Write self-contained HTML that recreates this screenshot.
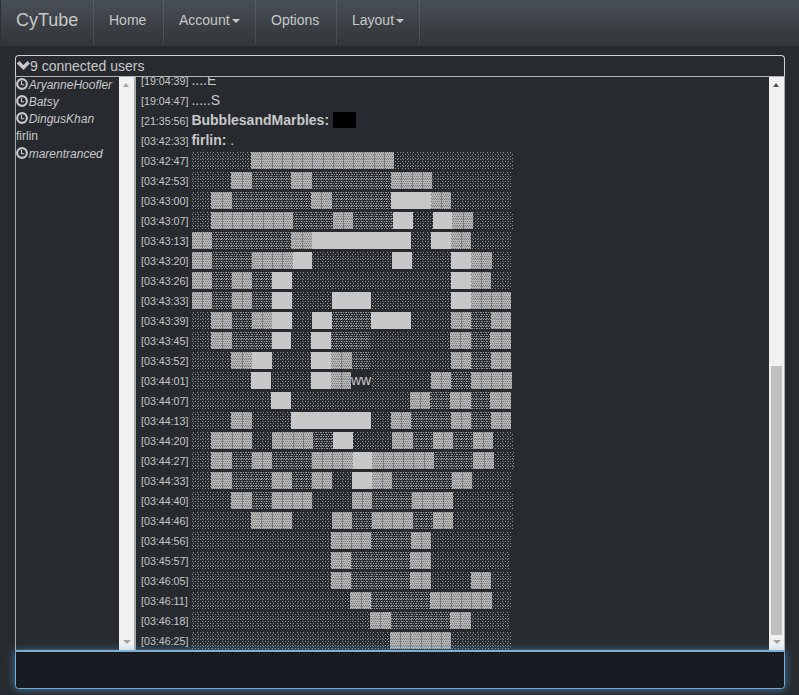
<!DOCTYPE html>
<html><head><meta charset="utf-8">
<style>
*{box-sizing:border-box}
html,body{margin:0;padding:0}
body{width:799px;height:695px;overflow:hidden;background:#272b30;color:#c8c8c8;font-family:"Liberation Sans",sans-serif;font-size:14px;line-height:20px;position:relative}
#nav{position:absolute;left:0;top:0;width:799px;height:46px;background:linear-gradient(#484e55,#3a3f44 60%,#323639);border-left:1px solid #2d3034}
#brand{position:absolute;left:15px;top:8px;font-size:18px;line-height:24px;color:#c8c8c8}
.nl{position:absolute;top:0;height:45px;line-height:20px;padding-top:10px;color:#c8c8c8}
.dv{position:absolute;top:0;width:1px;height:45px;background:rgba(255,255,255,0.1)}
.caret{display:inline-block;width:0;height:0;border-top:4px solid #c8c8c8;border-left:4px solid transparent;border-right:4px solid transparent;vertical-align:middle;margin-left:2px;margin-top:0}
#hdr{position:absolute;left:15px;top:55px;width:770px;height:22px;border:1px solid #d0d0d0;border-bottom:1px solid #b4b4b4;border-radius:4px 4px 0 0}
#hdr .t{position:absolute;left:14px;top:0px;line-height:20px}
#chev{position:absolute;left:0;top:0}
#ul{position:absolute;left:15px;top:77px;width:121px;height:574px;border-left:1px solid #aaa;border-bottom:1px solid #aaa;border-right:2px solid #aaa;overflow:hidden;font-size:12px;line-height:17.14px}
#ul .u{position:relative;height:17.14px;white-space:nowrap}
#ul .u i{font-style:italic}
.clk{display:inline-block;width:12px;height:12px;vertical-align:-1px;margin-right:0.7px}
#ulsb{position:absolute;left:103px;top:0;width:15px;height:573px;background:#f1f1f1}
#mb{position:absolute;left:136px;top:77px;width:649px;height:574px;border-right:1px solid #aaa;border-bottom:1px solid #aaa;overflow:hidden}
#mbin{position:absolute;left:5px;top:-7px;width:620px;white-space:nowrap}
.m{position:relative}
.ww{position:absolute;top:0}
#art{position:absolute;left:-136px;top:-77px}
.m{height:20px;white-space:nowrap}
.ts{font-size:8pt}
b.n{font-weight:bold}
#mbsb{position:absolute;left:633px;top:0;width:15px;height:573px;background:#f1f1f1}
#thumb{position:absolute;left:2px;top:289px;width:11px;height:269px;background:#c1c1c1}
.arr{position:absolute;width:0;height:0;border-left:3.75px solid transparent;border-right:3.75px solid transparent}
#inp{position:absolute;left:15px;top:651px;width:770px;height:38px;background:#181b22;border:1px solid #66afe9;border-radius:0 0 3.5px 3.5px;box-shadow:inset 0 1px 1px rgba(0,0,0,.075),0 0 8px rgba(102,175,233,.6)}
.spoil{display:inline-block;width:23px;height:16px;background:#000;vertical-align:top;margin-top:2px}
</style></head><body>
<div id="nav">
  <div id="brand">CyTube</div>
  <div class="dv" style="left:92px"></div>
  <div class="nl" style="left:108px">Home</div>
  <div class="dv" style="left:162px"></div>
  <div class="nl" style="left:178px">Account<span class="caret"></span></div>
  <div class="dv" style="left:254px"></div>
  <div class="nl" style="left:270px">Options</div>
  <div class="dv" style="left:335px"></div>
  <div class="nl" style="left:351px">Layout<span class="caret"></span></div>
  <div class="dv" style="left:418px"></div>
</div>
<div id="hdr">
  <svg id="chev" width="16" height="16" viewBox="0 0 16 16"><path d="M0.8 7.5 L7.5 14.1 L13.7 7.5 L11.6 4.9 L7.5 8.9 L3.4 4.9 Z" fill="#c8c8c8"/></svg>
  <span class="t">9 connected users</span>
</div>
<div id="ul">
  <div class="u"><svg class="clk" viewBox="0 0 12 12"><circle cx="6" cy="6" r="4.85" stroke="#c8c8c8" stroke-width="2.1" fill="none"/><path d="M5.5 3.1v3.6h2.6" stroke="#c8c8c8" stroke-width="1.15" fill="none"/></svg><i>AryanneHoofler</i></div>
  <div class="u"><svg class="clk" viewBox="0 0 12 12"><circle cx="6" cy="6" r="4.85" stroke="#c8c8c8" stroke-width="2.1" fill="none"/><path d="M5.5 3.1v3.6h2.6" stroke="#c8c8c8" stroke-width="1.15" fill="none"/></svg><i>Batsy</i></div>
  <div class="u"><svg class="clk" viewBox="0 0 12 12"><circle cx="6" cy="6" r="4.85" stroke="#c8c8c8" stroke-width="2.1" fill="none"/><path d="M5.5 3.1v3.6h2.6" stroke="#c8c8c8" stroke-width="1.15" fill="none"/></svg><i>DingusKhan</i></div>
  <div class="u">firlin</div>
  <div class="u"><svg class="clk" viewBox="0 0 12 12"><circle cx="6" cy="6" r="4.85" stroke="#c8c8c8" stroke-width="2.1" fill="none"/><path d="M5.5 3.1v3.6h2.6" stroke="#c8c8c8" stroke-width="1.15" fill="none"/></svg><i>marentranced</i></div>
  <div id="ulsb">
    <div class="arr" style="left:3.75px;top:6px;border-bottom:4px solid #a3a3a3"></div>
    <div class="arr" style="left:3.5px;bottom:6px;border-top:4.5px solid #a3a3a3;border-left-width:4px;border-right-width:4px"></div>
  </div>
</div>
<div id="mb">
  <div id="mbin">
<div class="m"><span class="ts">[19:04:39] </span><span>....E</span></div>
<div class="m"><span class="ts">[19:04:47] </span><span>.....S</span></div>
<div class="m"><span class="ts">[21:35:56] </span><b class="n">BubblesandMarbles: </b><span class="spoil"></span></div>
<div class="m"><span class="ts">[03:42:33] </span><b class="n">firlin: </b><span>.</span></div>
<div class="m"><span class="ts">[03:42:47] </span></div>
<div class="m"><span class="ts">[03:42:53] </span></div>
<div class="m"><span class="ts">[03:43:00] </span></div>
<div class="m"><span class="ts">[03:43:07] </span></div>
<div class="m"><span class="ts">[03:43:13] </span></div>
<div class="m"><span class="ts">[03:43:20] </span></div>
<div class="m"><span class="ts">[03:43:26] </span></div>
<div class="m"><span class="ts">[03:43:33] </span></div>
<div class="m"><span class="ts">[03:43:39] </span></div>
<div class="m"><span class="ts">[03:43:45] </span></div>
<div class="m"><span class="ts">[03:43:52] </span></div>
<div class="m"><span class="ts">[03:44:01] </span><span class="ww" style="left:209.93px">ww</span></div>
<div class="m"><span class="ts">[03:44:07] </span></div>
<div class="m"><span class="ts">[03:44:13] </span></div>
<div class="m"><span class="ts">[03:44:20] </span></div>
<div class="m"><span class="ts">[03:44:27] </span></div>
<div class="m"><span class="ts">[03:44:33] </span></div>
<div class="m"><span class="ts">[03:44:40] </span></div>
<div class="m"><span class="ts">[03:44:46] </span></div>
<div class="m"><span class="ts">[03:44:56] </span></div>
<div class="m"><span class="ts">[03:45:57] </span></div>
<div class="m"><span class="ts">[03:46:05] </span></div>
<div class="m"><span class="ts">[03:46:11] </span></div>
<div class="m"><span class="ts">[03:46:18] </span></div>
<div class="m"><span class="ts">[03:46:25] </span></div>

  </div>
  <svg id="art" width="799" height="695" shape-rendering="crispEdges">
  <defs>
  <pattern id="pa" patternUnits="userSpaceOnUse" width="10" height="20"><g fill="#c8c8c8" fill-opacity="0.66"><rect x="0" y="12" width="1" height="1"/><rect x="3" y="12" width="1" height="1"/><rect x="7" y="12" width="1" height="1"/><rect x="2" y="14" width="1" height="1"/><rect x="5" y="14" width="1" height="1"/><rect x="8" y="14" width="1" height="1"/><rect x="0" y="16" width="1" height="1"/><rect x="3" y="16" width="1" height="1"/><rect x="7" y="16" width="1" height="1"/><rect x="2" y="18" width="1" height="1"/><rect x="5" y="18" width="1" height="1"/><rect x="8" y="18" width="1" height="1"/><rect x="0" y="19" width="1" height="1"/><rect x="3" y="19" width="1" height="1"/><rect x="7" y="19" width="1" height="1"/><rect x="2" y="1" width="1" height="1"/><rect x="5" y="1" width="1" height="1"/><rect x="8" y="1" width="1" height="1"/><rect x="0" y="3" width="1" height="1"/><rect x="3" y="3" width="1" height="1"/><rect x="7" y="3" width="1" height="1"/><rect x="2" y="5" width="1" height="1"/><rect x="5" y="5" width="1" height="1"/><rect x="8" y="5" width="1" height="1"/><rect x="0" y="6" width="1" height="1"/><rect x="3" y="6" width="1" height="1"/><rect x="7" y="6" width="1" height="1"/><rect x="2" y="8" width="1" height="1"/><rect x="5" y="8" width="1" height="1"/><rect x="8" y="8" width="1" height="1"/></g></pattern>
  <pattern id="pb" patternUnits="userSpaceOnUse" width="10" height="20"><g fill="#c8c8c8" fill-opacity="0.68"><rect x="0" y="12" width="1" height="1"/><rect x="1" y="12" width="1" height="1"/><rect x="3" y="12" width="1" height="1"/><rect x="5" y="12" width="1" height="1"/><rect x="6" y="12" width="1" height="1"/><rect x="8" y="12" width="1" height="1"/><rect x="1" y="14" width="1" height="1"/><rect x="2" y="14" width="1" height="1"/><rect x="4" y="14" width="1" height="1"/><rect x="6" y="14" width="1" height="1"/><rect x="7" y="14" width="1" height="1"/><rect x="9" y="14" width="1" height="1"/><rect x="0" y="16" width="1" height="1"/><rect x="1" y="16" width="1" height="1"/><rect x="3" y="16" width="1" height="1"/><rect x="5" y="16" width="1" height="1"/><rect x="6" y="16" width="1" height="1"/><rect x="8" y="16" width="1" height="1"/><rect x="1" y="18" width="1" height="1"/><rect x="2" y="18" width="1" height="1"/><rect x="4" y="18" width="1" height="1"/><rect x="6" y="18" width="1" height="1"/><rect x="7" y="18" width="1" height="1"/><rect x="9" y="18" width="1" height="1"/><rect x="0" y="19" width="1" height="1"/><rect x="1" y="19" width="1" height="1"/><rect x="3" y="19" width="1" height="1"/><rect x="5" y="19" width="1" height="1"/><rect x="6" y="19" width="1" height="1"/><rect x="8" y="19" width="1" height="1"/><rect x="1" y="1" width="1" height="1"/><rect x="2" y="1" width="1" height="1"/><rect x="4" y="1" width="1" height="1"/><rect x="6" y="1" width="1" height="1"/><rect x="7" y="1" width="1" height="1"/><rect x="9" y="1" width="1" height="1"/><rect x="0" y="3" width="1" height="1"/><rect x="1" y="3" width="1" height="1"/><rect x="3" y="3" width="1" height="1"/><rect x="5" y="3" width="1" height="1"/><rect x="6" y="3" width="1" height="1"/><rect x="8" y="3" width="1" height="1"/><rect x="1" y="5" width="1" height="1"/><rect x="2" y="5" width="1" height="1"/><rect x="4" y="5" width="1" height="1"/><rect x="6" y="5" width="1" height="1"/><rect x="7" y="5" width="1" height="1"/><rect x="9" y="5" width="1" height="1"/><rect x="0" y="6" width="1" height="1"/><rect x="1" y="6" width="1" height="1"/><rect x="3" y="6" width="1" height="1"/><rect x="5" y="6" width="1" height="1"/><rect x="6" y="6" width="1" height="1"/><rect x="8" y="6" width="1" height="1"/><rect x="1" y="8" width="1" height="1"/><rect x="2" y="8" width="1" height="1"/><rect x="4" y="8" width="1" height="1"/><rect x="6" y="8" width="1" height="1"/><rect x="7" y="8" width="1" height="1"/><rect x="9" y="8" width="1" height="1"/></g></pattern>
  <pattern id="pc" patternUnits="userSpaceOnUse" width="10" height="20"><rect x="0" y="0" width="10" height="20" fill="#c8c8c8" fill-opacity="0.88"/><g fill="#272b30" fill-opacity="0.42"><rect x="0" y="12" width="1" height="1"/><rect x="2" y="12" width="1" height="1"/><rect x="4" y="12" width="1" height="1"/><rect x="6" y="12" width="1" height="1"/><rect x="8" y="12" width="1" height="1"/><rect x="1" y="14" width="1" height="1"/><rect x="3" y="14" width="1" height="1"/><rect x="5" y="14" width="1" height="1"/><rect x="7" y="14" width="1" height="1"/><rect x="9" y="14" width="1" height="1"/><rect x="0" y="16" width="1" height="1"/><rect x="2" y="16" width="1" height="1"/><rect x="4" y="16" width="1" height="1"/><rect x="6" y="16" width="1" height="1"/><rect x="8" y="16" width="1" height="1"/><rect x="1" y="18" width="1" height="1"/><rect x="3" y="18" width="1" height="1"/><rect x="5" y="18" width="1" height="1"/><rect x="7" y="18" width="1" height="1"/><rect x="9" y="18" width="1" height="1"/><rect x="0" y="19" width="1" height="1"/><rect x="2" y="19" width="1" height="1"/><rect x="4" y="19" width="1" height="1"/><rect x="6" y="19" width="1" height="1"/><rect x="8" y="19" width="1" height="1"/><rect x="1" y="1" width="1" height="1"/><rect x="3" y="1" width="1" height="1"/><rect x="5" y="1" width="1" height="1"/><rect x="7" y="1" width="1" height="1"/><rect x="9" y="1" width="1" height="1"/><rect x="0" y="3" width="1" height="1"/><rect x="2" y="3" width="1" height="1"/><rect x="4" y="3" width="1" height="1"/><rect x="6" y="3" width="1" height="1"/><rect x="8" y="3" width="1" height="1"/><rect x="1" y="5" width="1" height="1"/><rect x="3" y="5" width="1" height="1"/><rect x="5" y="5" width="1" height="1"/><rect x="7" y="5" width="1" height="1"/><rect x="9" y="5" width="1" height="1"/><rect x="0" y="6" width="1" height="1"/><rect x="2" y="6" width="1" height="1"/><rect x="4" y="6" width="1" height="1"/><rect x="6" y="6" width="1" height="1"/><rect x="8" y="6" width="1" height="1"/><rect x="1" y="8" width="1" height="1"/><rect x="3" y="8" width="1" height="1"/><rect x="5" y="8" width="1" height="1"/><rect x="7" y="8" width="1" height="1"/><rect x="9" y="8" width="1" height="1"/></g></pattern>
  <pattern id="pd" patternUnits="userSpaceOnUse" width="4" height="4"><rect x="0" y="0" width="4" height="4" fill="#c8c8c8"/></pattern>
  </defs>
<rect x="191.65" y="152" width="59.51" height="17" fill="url(#pa)"/>
<rect x="251.16" y="152" width="142.88" height="17" fill="url(#pc)"/>
<rect x="261" y="152" width="1" height="17" fill="#272b30" fill-opacity="0.35"/>
<rect x="272" y="152" width="1" height="17" fill="#272b30" fill-opacity="0.35"/>
<rect x="282" y="152" width="1" height="17" fill="#272b30" fill-opacity="0.35"/>
<rect x="292" y="152" width="1" height="17" fill="#272b30" fill-opacity="0.35"/>
<rect x="302" y="152" width="1" height="17" fill="#272b30" fill-opacity="0.35"/>
<rect x="312" y="152" width="1" height="17" fill="#272b30" fill-opacity="0.35"/>
<rect x="323" y="152" width="1" height="17" fill="#272b30" fill-opacity="0.35"/>
<rect x="333" y="152" width="1" height="17" fill="#272b30" fill-opacity="0.35"/>
<rect x="343" y="152" width="1" height="17" fill="#272b30" fill-opacity="0.35"/>
<rect x="353" y="152" width="1" height="17" fill="#272b30" fill-opacity="0.35"/>
<rect x="363" y="152" width="1" height="17" fill="#272b30" fill-opacity="0.35"/>
<rect x="374" y="152" width="1" height="17" fill="#272b30" fill-opacity="0.35"/>
<rect x="384" y="152" width="1" height="17" fill="#272b30" fill-opacity="0.35"/>
<rect x="394.05" y="152" width="119.03" height="17" fill="url(#pa)"/>
<rect x="191.65" y="172" width="39.68" height="17" fill="url(#pa)"/>
<rect x="231.33" y="172" width="20.41" height="17" fill="url(#pc)"/>
<rect x="242" y="172" width="1" height="17" fill="#272b30" fill-opacity="0.35"/>
<rect x="251.74" y="172" width="39.68" height="17" fill="url(#pb)"/>
<rect x="291.41" y="172" width="20.41" height="17" fill="url(#pc)"/>
<rect x="302" y="172" width="1" height="17" fill="#272b30" fill-opacity="0.35"/>
<rect x="311.83" y="172" width="79.35" height="17" fill="url(#pb)"/>
<rect x="391.18" y="172" width="40.82" height="17" fill="url(#pc)"/>
<rect x="401" y="172" width="1" height="17" fill="#272b30" fill-opacity="0.35"/>
<rect x="412" y="172" width="1" height="17" fill="#272b30" fill-opacity="0.35"/>
<rect x="422" y="172" width="1" height="17" fill="#272b30" fill-opacity="0.35"/>
<rect x="432.00" y="172" width="79.35" height="17" fill="url(#pa)"/>
<rect x="191.65" y="192" width="19.84" height="17" fill="url(#pa)"/>
<rect x="211.49" y="192" width="20.41" height="17" fill="url(#pc)"/>
<rect x="222" y="192" width="1" height="17" fill="#272b30" fill-opacity="0.35"/>
<rect x="231.90" y="192" width="79.35" height="17" fill="url(#pb)"/>
<rect x="311.25" y="192" width="20.41" height="17" fill="url(#pc)"/>
<rect x="321" y="192" width="1" height="17" fill="#272b30" fill-opacity="0.35"/>
<rect x="331.66" y="192" width="59.51" height="17" fill="url(#pb)"/>
<rect x="391.18" y="192" width="39.68" height="17" fill="url(#pd)"/>
<rect x="430.85" y="192" width="20.41" height="17" fill="url(#pc)"/>
<rect x="441" y="192" width="1" height="17" fill="#272b30" fill-opacity="0.35"/>
<rect x="451.27" y="192" width="59.51" height="17" fill="url(#pa)"/>
<rect x="191.65" y="212" width="19.84" height="17" fill="url(#pa)"/>
<rect x="211.49" y="212" width="81.65" height="17" fill="url(#pc)"/>
<rect x="222" y="212" width="1" height="17" fill="#272b30" fill-opacity="0.35"/>
<rect x="232" y="212" width="1" height="17" fill="#272b30" fill-opacity="0.35"/>
<rect x="242" y="212" width="1" height="17" fill="#272b30" fill-opacity="0.35"/>
<rect x="252" y="212" width="1" height="17" fill="#272b30" fill-opacity="0.35"/>
<rect x="263" y="212" width="1" height="17" fill="#272b30" fill-opacity="0.35"/>
<rect x="273" y="212" width="1" height="17" fill="#272b30" fill-opacity="0.35"/>
<rect x="283" y="212" width="1" height="17" fill="#272b30" fill-opacity="0.35"/>
<rect x="293.14" y="212" width="39.68" height="17" fill="url(#pb)"/>
<rect x="332.81" y="212" width="20.41" height="17" fill="url(#pc)"/>
<rect x="343" y="212" width="1" height="17" fill="#272b30" fill-opacity="0.35"/>
<rect x="353.22" y="212" width="39.68" height="17" fill="url(#pb)"/>
<rect x="392.90" y="212" width="19.84" height="17" fill="url(#pd)"/>
<rect x="412.74" y="212" width="19.84" height="17" fill="url(#pa)"/>
<rect x="432.58" y="212" width="19.84" height="17" fill="url(#pd)"/>
<rect x="452.41" y="212" width="20.41" height="17" fill="url(#pc)"/>
<rect x="463" y="212" width="1" height="17" fill="#272b30" fill-opacity="0.35"/>
<rect x="472.83" y="212" width="39.68" height="17" fill="url(#pa)"/>
<rect x="191.65" y="232" width="20.41" height="17" fill="url(#pc)"/>
<rect x="202" y="232" width="1" height="17" fill="#272b30" fill-opacity="0.35"/>
<rect x="212.06" y="232" width="79.35" height="17" fill="url(#pb)"/>
<rect x="291.41" y="232" width="20.41" height="17" fill="url(#pc)"/>
<rect x="302" y="232" width="1" height="17" fill="#272b30" fill-opacity="0.35"/>
<rect x="311.83" y="232" width="99.19" height="17" fill="url(#pd)"/>
<rect x="411.02" y="232" width="19.84" height="17" fill="url(#pa)"/>
<rect x="430.85" y="232" width="19.84" height="17" fill="url(#pd)"/>
<rect x="450.69" y="232" width="20.41" height="17" fill="url(#pc)"/>
<rect x="461" y="232" width="1" height="17" fill="#272b30" fill-opacity="0.35"/>
<rect x="471.10" y="232" width="39.68" height="17" fill="url(#pa)"/>
<rect x="191.65" y="252" width="20.41" height="17" fill="url(#pc)"/>
<rect x="202" y="252" width="1" height="17" fill="#272b30" fill-opacity="0.35"/>
<rect x="212.06" y="252" width="39.68" height="17" fill="url(#pb)"/>
<rect x="251.74" y="252" width="40.82" height="17" fill="url(#pc)"/>
<rect x="262" y="252" width="1" height="17" fill="#272b30" fill-opacity="0.35"/>
<rect x="272" y="252" width="1" height="17" fill="#272b30" fill-opacity="0.35"/>
<rect x="282" y="252" width="1" height="17" fill="#272b30" fill-opacity="0.35"/>
<rect x="292.56" y="252" width="19.84" height="17" fill="url(#pd)"/>
<rect x="312.40" y="252" width="79.35" height="17" fill="url(#pa)"/>
<rect x="391.75" y="252" width="19.84" height="17" fill="url(#pd)"/>
<rect x="411.59" y="252" width="39.68" height="17" fill="url(#pa)"/>
<rect x="451.27" y="252" width="19.84" height="17" fill="url(#pd)"/>
<rect x="471.10" y="252" width="20.41" height="17" fill="url(#pc)"/>
<rect x="481" y="252" width="1" height="17" fill="#272b30" fill-opacity="0.35"/>
<rect x="491.52" y="252" width="19.84" height="17" fill="url(#pa)"/>
<rect x="191.65" y="272" width="20.41" height="17" fill="url(#pc)"/>
<rect x="202" y="272" width="1" height="17" fill="#272b30" fill-opacity="0.35"/>
<rect x="212.06" y="272" width="19.84" height="17" fill="url(#pb)"/>
<rect x="231.90" y="272" width="20.41" height="17" fill="url(#pc)"/>
<rect x="242" y="272" width="1" height="17" fill="#272b30" fill-opacity="0.35"/>
<rect x="252.31" y="272" width="19.84" height="17" fill="url(#pb)"/>
<rect x="272.15" y="272" width="19.84" height="17" fill="url(#pd)"/>
<rect x="291.99" y="272" width="158.70" height="17" fill="url(#pa)"/>
<rect x="450.69" y="272" width="19.84" height="17" fill="url(#pd)"/>
<rect x="470.53" y="272" width="20.41" height="17" fill="url(#pc)"/>
<rect x="481" y="272" width="1" height="17" fill="#272b30" fill-opacity="0.35"/>
<rect x="490.94" y="272" width="19.84" height="17" fill="url(#pa)"/>
<rect x="191.65" y="292" width="20.41" height="17" fill="url(#pc)"/>
<rect x="202" y="292" width="1" height="17" fill="#272b30" fill-opacity="0.35"/>
<rect x="212.06" y="292" width="19.84" height="17" fill="url(#pb)"/>
<rect x="231.90" y="292" width="20.41" height="17" fill="url(#pc)"/>
<rect x="242" y="292" width="1" height="17" fill="#272b30" fill-opacity="0.35"/>
<rect x="252.31" y="292" width="19.84" height="17" fill="url(#pb)"/>
<rect x="272.15" y="292" width="19.84" height="17" fill="url(#pd)"/>
<rect x="291.99" y="292" width="39.68" height="17" fill="url(#pa)"/>
<rect x="331.66" y="292" width="39.68" height="17" fill="url(#pd)"/>
<rect x="371.34" y="292" width="79.35" height="17" fill="url(#pa)"/>
<rect x="450.69" y="292" width="19.84" height="17" fill="url(#pd)"/>
<rect x="470.53" y="292" width="40.82" height="17" fill="url(#pc)"/>
<rect x="481" y="292" width="1" height="17" fill="#272b30" fill-opacity="0.35"/>
<rect x="491" y="292" width="1" height="17" fill="#272b30" fill-opacity="0.35"/>
<rect x="501" y="292" width="1" height="17" fill="#272b30" fill-opacity="0.35"/>
<rect x="191.65" y="312" width="19.84" height="17" fill="url(#pa)"/>
<rect x="211.49" y="312" width="20.41" height="17" fill="url(#pc)"/>
<rect x="222" y="312" width="1" height="17" fill="#272b30" fill-opacity="0.35"/>
<rect x="231.90" y="312" width="19.84" height="17" fill="url(#pb)"/>
<rect x="251.74" y="312" width="20.41" height="17" fill="url(#pc)"/>
<rect x="262" y="312" width="1" height="17" fill="#272b30" fill-opacity="0.35"/>
<rect x="272.15" y="312" width="19.84" height="17" fill="url(#pd)"/>
<rect x="291.99" y="312" width="19.84" height="17" fill="url(#pa)"/>
<rect x="311.83" y="312" width="19.84" height="17" fill="url(#pd)"/>
<rect x="331.66" y="312" width="39.68" height="17" fill="url(#pb)"/>
<rect x="371.34" y="312" width="39.68" height="17" fill="url(#pd)"/>
<rect x="411.02" y="312" width="39.68" height="17" fill="url(#pa)"/>
<rect x="450.69" y="312" width="20.41" height="17" fill="url(#pc)"/>
<rect x="461" y="312" width="1" height="17" fill="#272b30" fill-opacity="0.35"/>
<rect x="471.10" y="312" width="19.84" height="17" fill="url(#pb)"/>
<rect x="490.94" y="312" width="20.41" height="17" fill="url(#pc)"/>
<rect x="501" y="312" width="1" height="17" fill="#272b30" fill-opacity="0.35"/>
<rect x="191.65" y="332" width="19.84" height="17" fill="url(#pa)"/>
<rect x="211.49" y="332" width="20.41" height="17" fill="url(#pc)"/>
<rect x="222" y="332" width="1" height="17" fill="#272b30" fill-opacity="0.35"/>
<rect x="231.90" y="332" width="39.68" height="17" fill="url(#pb)"/>
<rect x="271.58" y="332" width="19.84" height="17" fill="url(#pd)"/>
<rect x="291.41" y="332" width="19.84" height="17" fill="url(#pa)"/>
<rect x="311.25" y="332" width="19.84" height="17" fill="url(#pd)"/>
<rect x="331.09" y="332" width="39.68" height="17" fill="url(#pb)"/>
<rect x="370.77" y="332" width="79.35" height="17" fill="url(#pa)"/>
<rect x="450.12" y="332" width="20.41" height="17" fill="url(#pc)"/>
<rect x="460" y="332" width="1" height="17" fill="#272b30" fill-opacity="0.35"/>
<rect x="470.53" y="332" width="19.84" height="17" fill="url(#pb)"/>
<rect x="490.37" y="332" width="20.41" height="17" fill="url(#pc)"/>
<rect x="501" y="332" width="1" height="17" fill="#272b30" fill-opacity="0.35"/>
<rect x="191.65" y="352" width="39.68" height="17" fill="url(#pa)"/>
<rect x="231.33" y="352" width="20.41" height="17" fill="url(#pc)"/>
<rect x="242" y="352" width="1" height="17" fill="#272b30" fill-opacity="0.35"/>
<rect x="251.74" y="352" width="19.84" height="17" fill="url(#pd)"/>
<rect x="271.58" y="352" width="39.68" height="17" fill="url(#pa)"/>
<rect x="311.25" y="352" width="19.84" height="17" fill="url(#pd)"/>
<rect x="331.09" y="352" width="20.41" height="17" fill="url(#pc)"/>
<rect x="341" y="352" width="1" height="17" fill="#272b30" fill-opacity="0.35"/>
<rect x="351.50" y="352" width="19.84" height="17" fill="url(#pb)"/>
<rect x="371.34" y="352" width="79.35" height="17" fill="url(#pa)"/>
<rect x="450.69" y="352" width="20.41" height="17" fill="url(#pc)"/>
<rect x="461" y="352" width="1" height="17" fill="#272b30" fill-opacity="0.35"/>
<rect x="471.10" y="352" width="19.84" height="17" fill="url(#pb)"/>
<rect x="490.94" y="352" width="20.41" height="17" fill="url(#pc)"/>
<rect x="501" y="352" width="1" height="17" fill="#272b30" fill-opacity="0.35"/>
<rect x="191.65" y="372" width="59.51" height="17" fill="url(#pa)"/>
<rect x="251.16" y="372" width="19.84" height="17" fill="url(#pd)"/>
<rect x="271.00" y="372" width="39.68" height="17" fill="url(#pa)"/>
<rect x="310.68" y="372" width="19.84" height="17" fill="url(#pd)"/>
<rect x="330.52" y="372" width="20.41" height="17" fill="url(#pc)"/>
<rect x="341" y="372" width="1" height="17" fill="#272b30" fill-opacity="0.35"/>
<rect x="371.15" y="372" width="59.51" height="17" fill="url(#pa)"/>
<rect x="430.66" y="372" width="20.41" height="17" fill="url(#pc)"/>
<rect x="441" y="372" width="1" height="17" fill="#272b30" fill-opacity="0.35"/>
<rect x="451.07" y="372" width="19.84" height="17" fill="url(#pb)"/>
<rect x="470.91" y="372" width="40.82" height="17" fill="url(#pc)"/>
<rect x="481" y="372" width="1" height="17" fill="#272b30" fill-opacity="0.35"/>
<rect x="491" y="372" width="1" height="17" fill="#272b30" fill-opacity="0.35"/>
<rect x="502" y="372" width="1" height="17" fill="#272b30" fill-opacity="0.35"/>
<rect x="191.65" y="392" width="79.35" height="17" fill="url(#pa)"/>
<rect x="271.00" y="392" width="19.84" height="17" fill="url(#pd)"/>
<rect x="290.84" y="392" width="119.03" height="17" fill="url(#pa)"/>
<rect x="409.87" y="392" width="20.41" height="17" fill="url(#pc)"/>
<rect x="420" y="392" width="1" height="17" fill="#272b30" fill-opacity="0.35"/>
<rect x="430.28" y="392" width="19.84" height="17" fill="url(#pb)"/>
<rect x="450.12" y="392" width="20.41" height="17" fill="url(#pc)"/>
<rect x="460" y="392" width="1" height="17" fill="#272b30" fill-opacity="0.35"/>
<rect x="470.53" y="392" width="19.84" height="17" fill="url(#pb)"/>
<rect x="490.37" y="392" width="20.41" height="17" fill="url(#pc)"/>
<rect x="501" y="392" width="1" height="17" fill="#272b30" fill-opacity="0.35"/>
<rect x="191.65" y="412" width="39.68" height="17" fill="url(#pa)"/>
<rect x="231.33" y="412" width="20.41" height="17" fill="url(#pc)"/>
<rect x="242" y="412" width="1" height="17" fill="#272b30" fill-opacity="0.35"/>
<rect x="251.74" y="412" width="39.68" height="17" fill="url(#pa)"/>
<rect x="291.41" y="412" width="79.35" height="17" fill="url(#pd)"/>
<rect x="370.77" y="412" width="19.84" height="17" fill="url(#pa)"/>
<rect x="390.60" y="412" width="20.41" height="17" fill="url(#pc)"/>
<rect x="401" y="412" width="1" height="17" fill="#272b30" fill-opacity="0.35"/>
<rect x="411.02" y="412" width="39.68" height="17" fill="url(#pb)"/>
<rect x="450.69" y="412" width="20.41" height="17" fill="url(#pc)"/>
<rect x="461" y="412" width="1" height="17" fill="#272b30" fill-opacity="0.35"/>
<rect x="471.10" y="412" width="19.84" height="17" fill="url(#pb)"/>
<rect x="490.94" y="412" width="20.41" height="17" fill="url(#pc)"/>
<rect x="501" y="412" width="1" height="17" fill="#272b30" fill-opacity="0.35"/>
<rect x="191.65" y="432" width="19.84" height="17" fill="url(#pa)"/>
<rect x="211.49" y="432" width="40.82" height="17" fill="url(#pc)"/>
<rect x="222" y="432" width="1" height="17" fill="#272b30" fill-opacity="0.35"/>
<rect x="232" y="432" width="1" height="17" fill="#272b30" fill-opacity="0.35"/>
<rect x="242" y="432" width="1" height="17" fill="#272b30" fill-opacity="0.35"/>
<rect x="252.31" y="432" width="19.84" height="17" fill="url(#pa)"/>
<rect x="272.15" y="432" width="40.82" height="17" fill="url(#pc)"/>
<rect x="282" y="432" width="1" height="17" fill="#272b30" fill-opacity="0.35"/>
<rect x="293" y="432" width="1" height="17" fill="#272b30" fill-opacity="0.35"/>
<rect x="303" y="432" width="1" height="17" fill="#272b30" fill-opacity="0.35"/>
<rect x="312.97" y="432" width="19.84" height="17" fill="url(#pb)"/>
<rect x="332.81" y="432" width="19.84" height="17" fill="url(#pd)"/>
<rect x="352.65" y="432" width="39.68" height="17" fill="url(#pa)"/>
<rect x="392.33" y="432" width="20.41" height="17" fill="url(#pc)"/>
<rect x="403" y="432" width="1" height="17" fill="#272b30" fill-opacity="0.35"/>
<rect x="412.74" y="432" width="19.84" height="17" fill="url(#pb)"/>
<rect x="432.58" y="432" width="20.41" height="17" fill="url(#pc)"/>
<rect x="443" y="432" width="1" height="17" fill="#272b30" fill-opacity="0.35"/>
<rect x="452.99" y="432" width="19.84" height="17" fill="url(#pb)"/>
<rect x="472.83" y="432" width="20.41" height="17" fill="url(#pc)"/>
<rect x="483" y="432" width="1" height="17" fill="#272b30" fill-opacity="0.35"/>
<rect x="493.24" y="432" width="19.84" height="17" fill="url(#pa)"/>
<rect x="191.65" y="452" width="19.84" height="17" fill="url(#pa)"/>
<rect x="211.49" y="452" width="20.41" height="17" fill="url(#pc)"/>
<rect x="222" y="452" width="1" height="17" fill="#272b30" fill-opacity="0.35"/>
<rect x="231.90" y="452" width="19.84" height="17" fill="url(#pb)"/>
<rect x="251.74" y="452" width="20.41" height="17" fill="url(#pc)"/>
<rect x="262" y="452" width="1" height="17" fill="#272b30" fill-opacity="0.35"/>
<rect x="272.15" y="452" width="39.68" height="17" fill="url(#pb)"/>
<rect x="311.83" y="452" width="40.82" height="17" fill="url(#pc)"/>
<rect x="322" y="452" width="1" height="17" fill="#272b30" fill-opacity="0.35"/>
<rect x="332" y="452" width="1" height="17" fill="#272b30" fill-opacity="0.35"/>
<rect x="342" y="452" width="1" height="17" fill="#272b30" fill-opacity="0.35"/>
<rect x="352.65" y="452" width="19.84" height="17" fill="url(#pd)"/>
<rect x="372.49" y="452" width="61.24" height="17" fill="url(#pc)"/>
<rect x="383" y="452" width="1" height="17" fill="#272b30" fill-opacity="0.35"/>
<rect x="393" y="452" width="1" height="17" fill="#272b30" fill-opacity="0.35"/>
<rect x="403" y="452" width="1" height="17" fill="#272b30" fill-opacity="0.35"/>
<rect x="413" y="452" width="1" height="17" fill="#272b30" fill-opacity="0.35"/>
<rect x="424" y="452" width="1" height="17" fill="#272b30" fill-opacity="0.35"/>
<rect x="433.72" y="452" width="39.68" height="17" fill="url(#pb)"/>
<rect x="473.40" y="452" width="20.41" height="17" fill="url(#pc)"/>
<rect x="484" y="452" width="1" height="17" fill="#272b30" fill-opacity="0.35"/>
<rect x="493.81" y="452" width="19.84" height="17" fill="url(#pa)"/>
<rect x="191.65" y="472" width="19.84" height="17" fill="url(#pa)"/>
<rect x="211.49" y="472" width="20.41" height="17" fill="url(#pc)"/>
<rect x="222" y="472" width="1" height="17" fill="#272b30" fill-opacity="0.35"/>
<rect x="231.90" y="472" width="39.68" height="17" fill="url(#pb)"/>
<rect x="271.58" y="472" width="20.41" height="17" fill="url(#pc)"/>
<rect x="282" y="472" width="1" height="17" fill="#272b30" fill-opacity="0.35"/>
<rect x="291.99" y="472" width="19.84" height="17" fill="url(#pb)"/>
<rect x="311.83" y="472" width="20.41" height="17" fill="url(#pc)"/>
<rect x="322" y="472" width="1" height="17" fill="#272b30" fill-opacity="0.35"/>
<rect x="332.24" y="472" width="19.84" height="17" fill="url(#pa)"/>
<rect x="352.08" y="472" width="19.84" height="17" fill="url(#pd)"/>
<rect x="371.91" y="472" width="20.41" height="17" fill="url(#pc)"/>
<rect x="382" y="472" width="1" height="17" fill="#272b30" fill-opacity="0.35"/>
<rect x="392.33" y="472" width="59.51" height="17" fill="url(#pb)"/>
<rect x="451.84" y="472" width="20.41" height="17" fill="url(#pc)"/>
<rect x="462" y="472" width="1" height="17" fill="#272b30" fill-opacity="0.35"/>
<rect x="472.25" y="472" width="39.68" height="17" fill="url(#pa)"/>
<rect x="191.65" y="492" width="39.68" height="17" fill="url(#pa)"/>
<rect x="231.33" y="492" width="20.41" height="17" fill="url(#pc)"/>
<rect x="242" y="492" width="1" height="17" fill="#272b30" fill-opacity="0.35"/>
<rect x="251.74" y="492" width="19.84" height="17" fill="url(#pb)"/>
<rect x="271.58" y="492" width="40.82" height="17" fill="url(#pc)"/>
<rect x="282" y="492" width="1" height="17" fill="#272b30" fill-opacity="0.35"/>
<rect x="292" y="492" width="1" height="17" fill="#272b30" fill-opacity="0.35"/>
<rect x="302" y="492" width="1" height="17" fill="#272b30" fill-opacity="0.35"/>
<rect x="312.40" y="492" width="39.68" height="17" fill="url(#pa)"/>
<rect x="352.08" y="492" width="20.41" height="17" fill="url(#pc)"/>
<rect x="362" y="492" width="1" height="17" fill="#272b30" fill-opacity="0.35"/>
<rect x="372.49" y="492" width="39.68" height="17" fill="url(#pb)"/>
<rect x="412.16" y="492" width="40.82" height="17" fill="url(#pc)"/>
<rect x="422" y="492" width="1" height="17" fill="#272b30" fill-opacity="0.35"/>
<rect x="433" y="492" width="1" height="17" fill="#272b30" fill-opacity="0.35"/>
<rect x="443" y="492" width="1" height="17" fill="#272b30" fill-opacity="0.35"/>
<rect x="452.99" y="492" width="59.51" height="17" fill="url(#pa)"/>
<rect x="191.65" y="512" width="59.51" height="17" fill="url(#pa)"/>
<rect x="251.16" y="512" width="40.82" height="17" fill="url(#pc)"/>
<rect x="261" y="512" width="1" height="17" fill="#272b30" fill-opacity="0.35"/>
<rect x="272" y="512" width="1" height="17" fill="#272b30" fill-opacity="0.35"/>
<rect x="282" y="512" width="1" height="17" fill="#272b30" fill-opacity="0.35"/>
<rect x="291.99" y="512" width="39.68" height="17" fill="url(#pa)"/>
<rect x="331.66" y="512" width="20.41" height="17" fill="url(#pc)"/>
<rect x="342" y="512" width="1" height="17" fill="#272b30" fill-opacity="0.35"/>
<rect x="352.08" y="512" width="19.84" height="17" fill="url(#pb)"/>
<rect x="371.91" y="512" width="40.82" height="17" fill="url(#pc)"/>
<rect x="382" y="512" width="1" height="17" fill="#272b30" fill-opacity="0.35"/>
<rect x="392" y="512" width="1" height="17" fill="#272b30" fill-opacity="0.35"/>
<rect x="403" y="512" width="1" height="17" fill="#272b30" fill-opacity="0.35"/>
<rect x="412.74" y="512" width="19.84" height="17" fill="url(#pb)"/>
<rect x="432.58" y="512" width="20.41" height="17" fill="url(#pc)"/>
<rect x="443" y="512" width="1" height="17" fill="#272b30" fill-opacity="0.35"/>
<rect x="452.99" y="512" width="59.51" height="17" fill="url(#pa)"/>
<rect x="191.65" y="532" width="138.87" height="17" fill="url(#pa)"/>
<rect x="330.52" y="532" width="40.82" height="17" fill="url(#pc)"/>
<rect x="341" y="532" width="1" height="17" fill="#272b30" fill-opacity="0.35"/>
<rect x="351" y="532" width="1" height="17" fill="#272b30" fill-opacity="0.35"/>
<rect x="361" y="532" width="1" height="17" fill="#272b30" fill-opacity="0.35"/>
<rect x="371.34" y="532" width="39.68" height="17" fill="url(#pb)"/>
<rect x="411.02" y="532" width="20.41" height="17" fill="url(#pc)"/>
<rect x="421" y="532" width="1" height="17" fill="#272b30" fill-opacity="0.35"/>
<rect x="431.43" y="532" width="79.35" height="17" fill="url(#pa)"/>
<rect x="191.65" y="552" width="138.87" height="17" fill="url(#pa)"/>
<rect x="330.52" y="552" width="20.41" height="17" fill="url(#pc)"/>
<rect x="341" y="552" width="1" height="17" fill="#272b30" fill-opacity="0.35"/>
<rect x="350.93" y="552" width="59.51" height="17" fill="url(#pb)"/>
<rect x="410.44" y="552" width="20.41" height="17" fill="url(#pc)"/>
<rect x="421" y="552" width="1" height="17" fill="#272b30" fill-opacity="0.35"/>
<rect x="430.85" y="552" width="79.35" height="17" fill="url(#pa)"/>
<rect x="191.65" y="572" width="138.87" height="17" fill="url(#pa)"/>
<rect x="330.52" y="572" width="20.41" height="17" fill="url(#pc)"/>
<rect x="341" y="572" width="1" height="17" fill="#272b30" fill-opacity="0.35"/>
<rect x="350.93" y="572" width="59.51" height="17" fill="url(#pb)"/>
<rect x="410.44" y="572" width="20.41" height="17" fill="url(#pc)"/>
<rect x="421" y="572" width="1" height="17" fill="#272b30" fill-opacity="0.35"/>
<rect x="430.85" y="572" width="39.68" height="17" fill="url(#pa)"/>
<rect x="470.53" y="572" width="20.41" height="17" fill="url(#pc)"/>
<rect x="481" y="572" width="1" height="17" fill="#272b30" fill-opacity="0.35"/>
<rect x="490.94" y="572" width="19.84" height="17" fill="url(#pa)"/>
<rect x="191.65" y="592" width="158.70" height="17" fill="url(#pa)"/>
<rect x="350.35" y="592" width="20.41" height="17" fill="url(#pc)"/>
<rect x="361" y="592" width="1" height="17" fill="#272b30" fill-opacity="0.35"/>
<rect x="370.77" y="592" width="59.51" height="17" fill="url(#pb)"/>
<rect x="430.28" y="592" width="61.24" height="17" fill="url(#pc)"/>
<rect x="440" y="592" width="1" height="17" fill="#272b30" fill-opacity="0.35"/>
<rect x="451" y="592" width="1" height="17" fill="#272b30" fill-opacity="0.35"/>
<rect x="461" y="592" width="1" height="17" fill="#272b30" fill-opacity="0.35"/>
<rect x="471" y="592" width="1" height="17" fill="#272b30" fill-opacity="0.35"/>
<rect x="481" y="592" width="1" height="17" fill="#272b30" fill-opacity="0.35"/>
<rect x="491.52" y="592" width="19.84" height="17" fill="url(#pa)"/>
<rect x="191.65" y="612" width="178.54" height="17" fill="url(#pa)"/>
<rect x="370.19" y="612" width="20.41" height="17" fill="url(#pc)"/>
<rect x="380" y="612" width="1" height="17" fill="#272b30" fill-opacity="0.35"/>
<rect x="390.60" y="612" width="59.51" height="17" fill="url(#pb)"/>
<rect x="450.12" y="612" width="20.41" height="17" fill="url(#pc)"/>
<rect x="460" y="612" width="1" height="17" fill="#272b30" fill-opacity="0.35"/>
<rect x="470.53" y="612" width="39.68" height="17" fill="url(#pa)"/>
<rect x="191.65" y="632" width="198.38" height="17" fill="url(#pa)"/>
<rect x="390.03" y="632" width="61.24" height="17" fill="url(#pc)"/>
<rect x="400" y="632" width="1" height="17" fill="#272b30" fill-opacity="0.35"/>
<rect x="410" y="632" width="1" height="17" fill="#272b30" fill-opacity="0.35"/>
<rect x="421" y="632" width="1" height="17" fill="#272b30" fill-opacity="0.35"/>
<rect x="431" y="632" width="1" height="17" fill="#272b30" fill-opacity="0.35"/>
<rect x="441" y="632" width="1" height="17" fill="#272b30" fill-opacity="0.35"/>
<rect x="451.27" y="632" width="59.51" height="17" fill="url(#pa)"/>
  </svg>
  <div id="mbsb">
    <div class="arr" style="left:3.75px;top:6px;border-bottom:4px solid #505050"></div>
    <div id="thumb"></div>
    <div class="arr" style="left:3.5px;bottom:6px;border-top:4.5px solid #a3a3a3;border-left-width:4px;border-right-width:4px"></div>
  </div>
</div>
<div id="inp"></div>
</body></html>
